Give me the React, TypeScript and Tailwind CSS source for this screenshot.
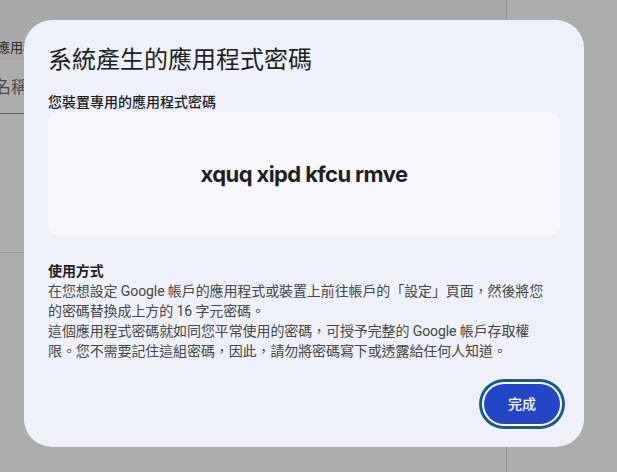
import React from "react";

const cjk = '"Roboto", "Noto Sans CJK TC", "Noto Sans", sans-serif';

export default function App() {
  return (
    <div
      className="relative w-[617px] h-[472px] overflow-hidden bg-[#adadad]"
      style={{ fontFamily: cjk }}
    >
      {/* background page */}
      <div className="flex h-full">
        <div className="w-[507px] border-r border-[#8e8e8e] flex flex-col">
          <div className="h-[60px] bg-[#a9a9a9] pt-[40px] -ml-[3px] text-[13px] leading-[16px] text-[#2e2e2e] whitespace-nowrap">
            應用程式名稱
          </div>
          <div className="h-[54px] border-b border-[#5c5c5c] -ml-[6px] pt-[15px] text-[17px] leading-[24px] text-[#4f4f4f] whitespace-nowrap">
            名稱
          </div>
          <div className="h-[139px] border-b border-[#9a9a9a]" />
        </div>
        <div className="flex-1" />
      </div>

      {/* dialog */}
      <div className="absolute left-[24px] top-[20px] w-[560px] h-[427px] rounded-[28px] bg-[#eef1f9] px-6 pt-6 pb-[23px] flex flex-col">
        <h1 className="text-[24px] leading-8 text-[#1f1f1f] font-normal">
          系統產生的應用程式密碼
        </h1>
        <div className="mt-4 text-[14px] leading-5 font-medium text-[#1f1f1f]">
          您裝置專用的應用程式密碼
        </div>
        <div className="h-[124px] rounded-[12px] bg-[#f7f8fd] flex items-center justify-center">
          <span
            className="text-[22px] font-bold text-[#1f1f1f] tracking-[-0.6px]"
            style={{ fontFamily: '"Inter", "Open Sans", sans-serif' }}
          >
            xquq xipd kfcu rmve
          </span>
        </div>
        <div className="mt-[25px] text-[14px] leading-5 text-[#444746] whitespace-nowrap tracking-[-0.1px]">
          <div className="font-bold text-[#1f1f1f]">使用方式</div>
          <div>在您想設定 Google 帳戶的應用程式或裝置上前往帳戶的「設定」頁面，然後將您</div>
          <div>的密碼替換成上方的 16 字元密碼。</div>
          <div>這個應用程式密碼就如同您平常使用的密碼，可授予完整的 Google 帳戶存取權</div>
          <div>限。您不需要記住這組密碼，因此，請勿將密碼寫下或透露給任何人知道。</div>
        </div>
        <div className="mt-auto flex justify-end">
          <button className="h-10 px-6 rounded-full bg-[#2346c6] text-white text-[14px] font-medium shadow-[0_0_0_2px_#ffffff,0_0_0_5px_#175b8c]">
            完成
          </button>
        </div>
      </div>
    </div>
  );
}
